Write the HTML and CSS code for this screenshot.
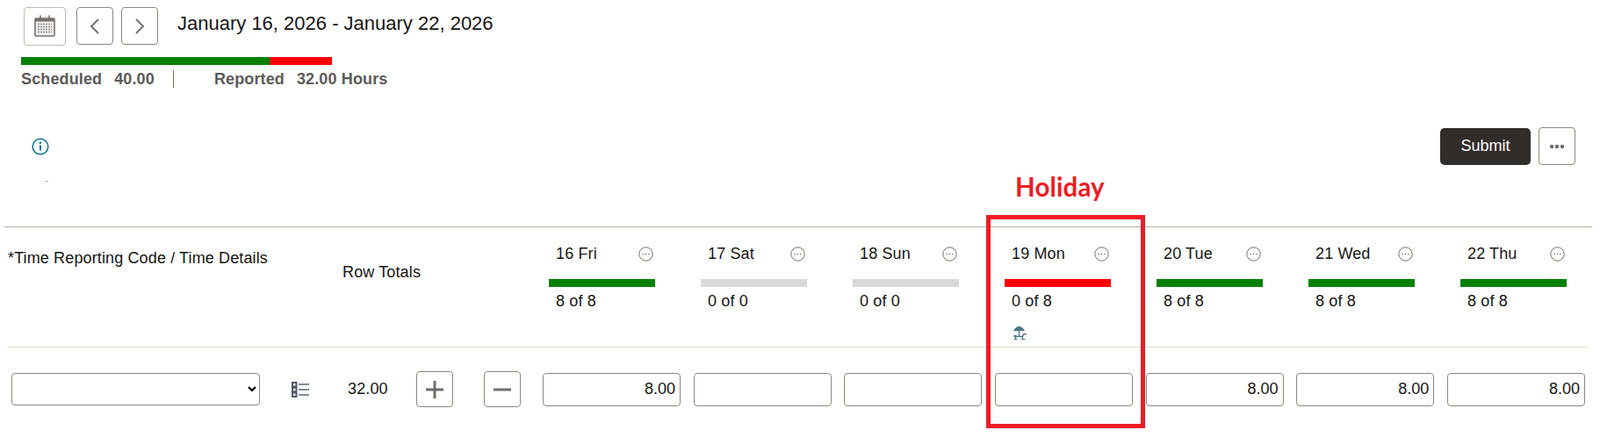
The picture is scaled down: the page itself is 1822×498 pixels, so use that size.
FILE: index.html
```html
<!DOCTYPE html>
<html lang="en">
<head>
    <meta charset="UTF-8">
    <meta name="viewport" content="width=device-width, initial-scale=1.0">
    <title>Timesheet</title>
    <link rel="stylesheet" href="styles.css">
</head>
<body>
    <div class="toolbar">
        <button class="iconBtn calBtn" aria-label="Calendar">
            <svg width="24" height="25" viewBox="0 0 24 25">
                <rect x="1" y="4" width="22" height="20" rx="1" fill="#f1f0ef" stroke="#74716e" stroke-width="1.6"/>
                <rect x="1" y="4" width="22" height="3.500" fill="#74716e"/>
                <path d="M7 0.500v5.500M17 0.500v5.500" stroke="#74716e" stroke-width="1.600"/>
                <path d="M4 10.500h16M4 13.500h16M4 16.500h16M4 19.500h16" stroke="#8b8885" stroke-width="1.700" stroke-dasharray="2 1"/>
            </svg>
        </button>
        <button class="iconBtn navBtn" aria-label="Previous">
            <svg width="12" height="20" viewBox="0 0 12 20"><path d="M10 2 2 10l8 8" fill="none" stroke="#6f6c69" stroke-width="1.800"/></svg>
        </button>
        <button class="iconBtn navBtn" aria-label="Next">
            <svg width="12" height="20" viewBox="0 0 12 20"><path d="M2 2l8 8-8 8" fill="none" stroke="#6f6c69" stroke-width="1.800"/></svg>
        </button>
        <h1 class="range">January 16, 2026 - January 22, 2026</h1>
    </div>

    <div class="summary">
        <div class="summaryBar"><span class="green"></span><span class="red"></span></div>
        <div class="stats">
            <span class="stat">Scheduled</span><span class="num">40.00</span>
            <span class="sep"></span>
            <span class="stat">Reported</span><span class="num">32.00 Hours</span>
        </div>
    </div>

    <div class="actions">
        <svg class="info" width="20" height="20" viewBox="0 0 20 20">
            <circle cx="10" cy="10" r="8.800" fill="none" stroke="#04728f" stroke-width="1.500"/>
            <path d="M10 8.500v6" stroke="#04728f" stroke-width="2"/>
            <circle cx="10" cy="5.800" r="1.200" fill="#04728f"/>
        </svg>
        <button class="submit">Submit</button>
        <button class="iconBtn moreBtn" aria-label="More">
            <svg width="18" height="6" viewBox="0 0 18 6"><circle cx="3" cy="3" r="2.200" fill="#6f6c69"/><circle cx="9" cy="3" r="2.200" fill="#6f6c69"/><circle cx="15" cy="3" r="2.200" fill="#6f6c69"/></svg>
        </button>
    </div>
    <div class="tick"></div>

    <div class="sheet">
        <div class="row headRow">
            <div class="codeHead">*Time Reporting Code / Time Details</div>
            <div class="totalHead">Row Totals</div>

            <div class="day">
                <div class="dayTop"><span>16 Fri</span><svg class="dots"><use href="#dotsIcon"/></svg></div>
                <div class="dayBar green"></div>
                <div class="dayHours">8 of 8</div>
            </div>
            <div class="day">
                <div class="dayTop"><span>17 Sat</span><svg class="dots"><use href="#dotsIcon"/></svg></div>
                <div class="dayBar grey"></div>
                <div class="dayHours">0 of 0</div>
            </div>
            <div class="day">
                <div class="dayTop"><span>18 Sun</span><svg class="dots"><use href="#dotsIcon"/></svg></div>
                <div class="dayBar grey"></div>
                <div class="dayHours">0 of 0</div>
            </div>
            <div class="day">
                <div class="dayTop"><span>19 Mon</span><svg class="dots"><use href="#dotsIcon"/></svg></div>
                <div class="dayBar red"></div>
                <div class="dayHours">0 of 8</div>
                <svg class="beach" width="17" height="16" viewBox="0 0 17 16">
                    <path d="M1 6.500C2 3.500 4.500 1 7.500 1s5.500 2.500 6.500 5.500c-1-.8-2-.8-3 0-1-.8-2-.8-3.500 0-1.500-.8-2.500-.8-3.500 0-1-.8-2-.8-3 0z" fill="#4f7488"/>
                    <path d="M7.500 6v6" stroke="#4f7488" stroke-width="1.400"/>
                    <path d="M1.500 12.500h10l1-2.500 3.500-.5M1.500 11.500h3" fill="none" stroke="#4f7488" stroke-width="1.500"/>
                    <path d="M3.500 12.500V15.500M1.500 15.500h4M11.500 12.500V15.500M9.500 15.500h5" stroke="#4f7488" stroke-width="1.200"/>
                </svg>
            </div>
            <div class="day">
                <div class="dayTop"><span>20 Tue</span><svg class="dots"><use href="#dotsIcon"/></svg></div>
                <div class="dayBar green"></div>
                <div class="dayHours">8 of 8</div>
            </div>
            <div class="day">
                <div class="dayTop"><span>21 Wed</span><svg class="dots"><use href="#dotsIcon"/></svg></div>
                <div class="dayBar green"></div>
                <div class="dayHours">8 of 8</div>
            </div>
            <div class="day">
                <div class="dayTop"><span>22 Thu</span><svg class="dots"><use href="#dotsIcon"/></svg></div>
                <div class="dayBar green"></div>
                <div class="dayHours">8 of 8</div>
            </div>
        </div>

        <div class="row entryRow">
            <div class="codeCell">
                <select class="codeSelect"><option></option></select>
                <svg class="listIcon" width="20" height="18" viewBox="0 0 20 18">
                    <path d="M1 1h4.500v4.500H1zM1 6.800h4.500v4.500H1zM1 12.500h4.500V17H1z" fill="#fff" stroke="#4f5968" stroke-width="2"/>
                    <path d="M8 3h12M8 9h12M8 15h12" stroke="#5a6472" stroke-width="1.400"/>
                </svg>
            </div>
            <div class="totalCell">
                <span class="rowTotal">32.00</span>
                <button class="iconBtn rowBtn" aria-label="Add">
                    <svg width="22" height="22" viewBox="0 0 22 22"><path d="M11 1v20M1 11h20" stroke="#6f6c69" stroke-width="3"/></svg>
                </button>
                <button class="iconBtn rowBtn" aria-label="Remove">
                    <svg width="22" height="22" viewBox="0 0 22 22"><path d="M1 11h20" stroke="#6f6c69" stroke-width="3"/></svg>
                </button>
            </div>
            <input class="hours" value="8.00">
            <input class="hours" value="">
            <input class="hours" value="">
            <input class="hours" value="">
            <input class="hours" value="8.00">
            <input class="hours" value="8.00">
            <input class="hours" value="8.00">
        </div>
    </div>

    <!-- annotation drawn over the screenshot -->
    <div class="holidayLabel">Holiday</div>
    <div class="holidayBox"></div>

    <svg width="0" height="0" class="defs">
        <symbol id="dotsIcon" viewBox="0 0 17 17">
            <circle cx="8.500" cy="8.500" r="7.700" fill="none" stroke="#6f6c69" stroke-width="1"/>
            <circle cx="5.200" cy="8.500" r="0.800" fill="#6f6c69"/>
            <circle cx="8.500" cy="8.500" r="0.800" fill="#6f6c69"/>
            <circle cx="11.800" cy="8.500" r="0.800" fill="#6f6c69"/>
        </symbol>
    </svg>
</body>
</html>
```

FILE: styles.css
```css
*{
    margin: 0;
    padding: 0;
    box-sizing: border-box;
}
body{
    width: 1822px;
    height: 498px;
    position: relative;
    overflow: hidden;
    background-color: #fff;
    color: #161513;
    font-family: "Liberation Sans", Arial, sans-serif;
    font-size: 18px;
    letter-spacing: 0.13px;
}
.defs{
    position: absolute;
}
.iconBtn{
    display: flex;
    flex: none;
    justify-content: center;
    align-items: center;
    background-color: #fff;
    border: 1px solid #8a8783;
    border-radius: 4px;
}
.toolbar{
    display: flex;
    align-items: center;
    height: 43px;
    margin: 8px 0 0 27px;
}
.calBtn{
    width: 48px;
    height: 44px;
    border-color: #bdbab6;
    margin-right: 12px;
}
.navBtn{
    width: 42px;
    height: 43px;
    margin-right: 9px;
}
.range{
    margin: -5px 0 0 13px;
    font-size: 22px;
    font-weight: normal;
    letter-spacing: 0;
}
.summary{
    margin: 14px 0 0 24px;
}
.summaryBar{
    display: flex;
    width: 354px;
    height: 9px;
}
.green{
    background-color: #008000;
}
.red{
    background-color: #f00;
}
.grey{
    background-color: #d9d9d9;
}
.summaryBar .green{
    width: 283px;
}
.summaryBar .red{
    width: 71px;
}
.stats{
    display: flex;
    align-items: center;
    height: 24px;
    margin-top: 4px;
    color: #5c5a58;
    font-size: 18px;
    font-weight: bold;
}
.stat{
    margin-right: 14px;
}
.sep{
    width: 1px;
    height: 20px;
    margin: 0 46px 0 21px;
    background-color: #6f6c69;
}
.actions{
    display: flex;
    align-items: center;
    height: 43px;
    margin: 43px 28px 0 36px;
}
.submit{
    width: 103px;
    height: 42px;
    margin-left: auto;
    border: none;
    border-radius: 5px;
    background-color: #312d2a;
    color: #fff;
    font-family: inherit;
    font-size: 18px;
}
.moreBtn{
    width: 42px;
    height: 43px;
    margin-left: 9px;
}
.tick{
    width: 4px;
    height: 1px;
    margin: 18px 0 0 51px;
    background-color: #b5b2ae;
}
.sheet{
    margin: 51px 9px 0 5px;
    border-top: 1px solid #b5b0a8;
}
.row{
    display: grid;
    margin-left: 4px;
}
.headRow{
    grid-template-columns: 381px 228px repeat(6, 173px) 1fr;
    height: 137px;
    margin-right: 4px;
    border-bottom: 1px solid #d3e8c8;
}
.codeHead{
    padding-top: 25px;
}
.totalHead{
    grid-column: 2;
    padding-top: 41px;
}
.dayTop{
    display: flex;
    justify-content: space-between;
    align-items: center;
    width: 111px;
    margin: 20px 0 0 15px;
}
.dots{
    width: 17px;
    height: 17px;
}
.dayBar{
    width: 121px;
    height: 9px;
    margin: 18px 0 0 7px;
}
.dayHours{
    margin: 6px 0 0 15px;
}
.beach{
    display: block;
    margin: 17px 0 0 16px;
}
.entryRow{
    grid-template-columns: 381px 228px repeat(6, 171.67px) 157px;
    align-items: center;
    margin-top: 27px;
}
.codeCell{
    display: flex;
    align-items: center;
}
.codeSelect{
    width: 283px;
    height: 37px;
    margin-left: 4px;
    background-color: #fff;
    border: 1px solid #8a8783;
    border-radius: 4px;
    font-size: 18px;
}
.listIcon{
    margin-left: 36px;
}
.totalCell{
    display: flex;
    align-items: center;
}
.rowTotal{
    flex: none;
    width: 78px;
    margin-left: 6px;
}
.rowBtn{
    width: 42px;
    height: 41px;
    margin-right: 35px;
}
.hours{
    width: 157px;
    height: 38px;
    padding: 0 5px;
    border: 1px solid #8a8783;
    border-radius: 4px;
    color: #161513;
    font-family: inherit;
    font-size: 18px;
    text-align: right;
}
.holidayLabel{
    position: absolute;
    left: 1156px;
    top: 195px;
    color: #ed1c24;
    font-family: Lato, sans-serif;
    font-size: 29.5px;
    font-weight: bold;
}
.holidayBox{
    position: absolute;
    left: 1123px;
    top: 245px;
    width: 181px;
    height: 243px;
    border: 5px solid #ed1c24;
}
```
